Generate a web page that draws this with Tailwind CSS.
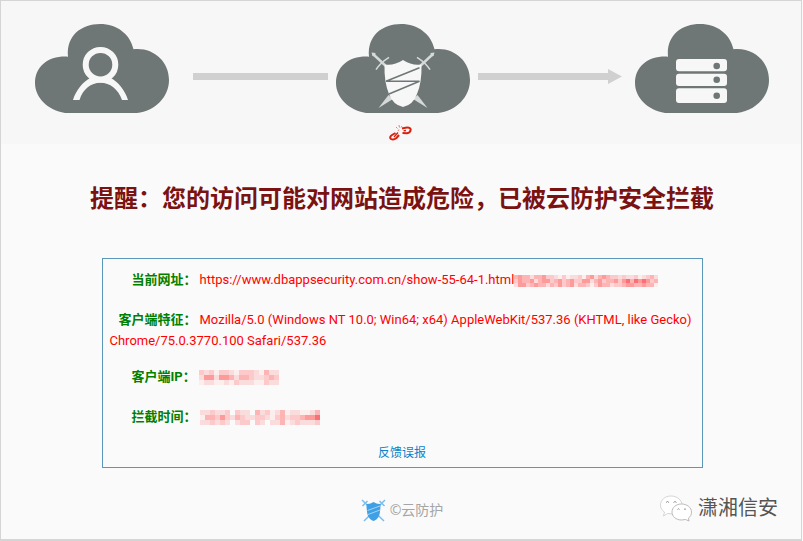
<!DOCTYPE html>
<html lang="zh-CN">
<head>
<meta charset="utf-8">
<title>云防护</title>
<script src="https://cdn.jsdelivr.net/npm/@tailwindcss/browser@4"></script>
</head>
<body class="bg-[#fafafa] font-['Open_Sans','Noto_Sans_CJK_SC',sans-serif]">
<svg class="hidden" aria-hidden="true">
  <symbol id="cloud" viewBox="0 0 134 89">
    <path fill="#6e7776" d="M33 32.700C31 12 46 0 65 0C82 0 95 10 98.500 25.200C118 23 134 37 134 56C134 73 120 87 102 89H30C13 86 0 74 0 59C0 42 14 31.500 33 32.700Z"/>
  </symbol>
</svg>
<div class="mr-px flex min-h-[541px] flex-col border border-b-2 border-[#d5d5d5]">
  <header class="bg-[#f7f7f7] pt-[23px] pr-8 pb-0 pl-[34px]">
    <div class="flex items-start">
      <svg class="h-[89px] w-[134px] shrink-0" viewBox="0 0 134 89" role="img" aria-label="访客">
        <use href="#cloud"/>
        <path fill="#f7f7f7" d="M38 76C41 66 48 58 55 54H76C83 58 90 66 93 76H87C83 65 75 58.800 65.500 58.800C56 58.800 48 65 44.500 76Z"/>
        <circle cx="65.500" cy="40.700" r="14.800" fill="#6e7776" stroke="#f7f7f7" stroke-width="6"/>
      </svg>
      <div class="mt-[49px] mr-2 ml-6 h-[7px] grow-[15] basis-0 bg-[#d0d0d0]"></div>
      <div class="flex shrink-0 flex-col items-center">
        <svg class="h-[89px] w-[134px]" viewBox="0 0 134 89" role="img" aria-label="云防护">
          <use href="#cloud"/>
          <g id="sword" stroke="#d6d9d9" fill="#d6d9d9">
            <path stroke-width="2.400" d="M37 30L52 44"/>
            <path stroke="none" d="M35.500 28.500L39.500 29L39 32.500L36.500 32Z"/>
            <path fill="none" stroke-width="1.500" d="M40 45.700Q44 39 53 33.300"/>
            <path stroke="none" d="M77 75L81.500 71L91.500 84Z"/>
          </g>
          <use href="#sword" transform="matrix(-1 0 0 1 134 0)"/>
          <path fill="#f7f7f7" d="M67 36Q58 42 48.500 40.500Q48 58 53 70Q57 81 67 83Q77 81 81 70Q86 58 85.500 40.500Q76 42 67 36Z"/>
          <path fill="none" stroke="#6e7776" stroke-width="1.500" d="M83.500 43.700L50 57.300H83.500L53 70"/>
        </svg>
        <svg class="mt-3 mb-[3px] ml-[-6px] h-4 w-[23px]" viewBox="0 0 23 16" fill="none" stroke="#d9210f" stroke-width="2">
          <path d="M6.500 8L3 10Q0 12 2 14Q4.500 15.500 7.500 13L10 10"/>
          <path d="M13 3.500L16.500 2.800Q21 2 21.700 4.500Q21.500 8 18 8.200L13.500 8"/>
          <path stroke-width="1.300" d="M5 12L9 7.500M14.500 5.800L17 5.500"/>
          <path stroke-width=".8" stroke="#ec5a4c" d="M10 0L10.500 2.500M7 2L8.500 3.500M13 1L12 2.500M9 6L10 4.500"/>
        </svg>
      </div>
      <div class="mt-[45px] mr-[13px] ml-2 flex grow-[16] basis-0 items-center">
        <div class="h-[7px] grow bg-[#d0d0d0]"></div>
        <svg class="h-[15px] w-[14px]" viewBox="0 0 14 15"><path fill="#d0d0d0" d="M0 0L14 7.500L0 15Z"/></svg>
      </div>
      <svg class="h-[89px] w-[134px] shrink-0" viewBox="0 0 134 89" role="img" aria-label="服务器">
        <use href="#cloud"/>
        <g fill="#f7f7f7">
          <rect x="41" y="35" width="51" height="12.300" rx="3"/>
          <rect x="41" y="49.700" width="51" height="12.300" rx="3"/>
          <rect x="41" y="64.300" width="51" height="14.700" rx="3"/>
        </g>
        <g fill="#6e7776">
          <circle cx="81.700" cy="42" r="3.300"/><circle cx="81.700" cy="55.700" r="3.300"/><circle cx="81.700" cy="71.700" r="3.300"/>
        </g>
      </svg>
    </div>
  </header>
  <main class="pl-[2px]">
    <h1 class="mt-9 text-center text-2xl leading-9 font-bold text-[#7b1212]">提醒：您的访问可能对网站造成危险，已被云防护安全拦截</h1>
    <section class="mx-auto mt-[42px] w-full max-w-[601px] border border-[#5b97b8] px-[7px] pt-[10px] font-['Roboto','Noto_Sans_CJK_SC',sans-serif] text-[13px] leading-[21px] text-[#ff0000]">
      <dl>
        <div class="mb-[19px]">
          <dt class="mr-[3px] inline-block pl-[22px] font-bold text-[#008000]">当前网址：</dt><dd class="inline">https://www.dbappsecurity.com.cn/show-55-64-1.html<span class="inline-block align-middle" data-mosaic="url"></span></dd>
        </div>
        <div class="mb-[15px]">
          <dt class="mr-[3px] inline-block pl-[9px] font-bold text-[#008000]">客户端特征：</dt><dd class="inline">Mozilla/5.0 (Windows NT 10.0; Win64; x64) AppleWebKit/537.36 (KHTML, like Gecko) Chrome/75.0.3770.100 Safari/537.36</dd>
        </div>
        <div class="mb-[19px]">
          <dt class="mr-[3px] inline-block pl-[22px] font-bold text-[#008000]">客户端IP：</dt><dd class="inline"><span class="inline-block align-middle" data-mosaic="ip"></span></dd>
        </div>
        <div class="mb-4">
          <dt class="mr-[3px] inline-block pl-[22px] font-bold text-[#008000]">拦截时间：</dt><dd class="inline"><span class="inline-block align-middle" data-mosaic="time"></span></dd>
        </div>
      </dl>
      <p class="pb-[3px] text-center text-xs leading-[21px]"><a href="#" class="text-[#0c82c8]">反馈误报</a></p>
    </section>
  </main>
  <footer class="relative mt-7 flex items-center justify-center gap-1 pl-[2px] text-sm leading-7 text-[#a5a5a5]">
    <svg class="h-[23px] w-[25px]" viewBox="0 0 25 23">
      <path fill="none" stroke="#7cbdec" stroke-width="1.500" d="M1 1L23 22M24 1L3 22M1.500 7L6.500 2M23.500 7L18.500 2"/>
      <path fill="#3fa0e6" d="M12.500 3Q9 5.500 5.500 5Q5.500 13 7 17Q9 21 12.500 22Q16 21 18 17Q19.500 13 19.500 5Q16 5.500 12.500 3Z"/>
      <path fill="none" stroke="#a5d4f5" d="M19 7L6.500 11.500M19 11L7 15.500"/>
    </svg>
    <span>©云防护</span>
    <div class="absolute right-[23px] bottom-0 flex items-center gap-[6px] text-xl leading-8 text-[#555]">
      <svg class="h-[27px] w-[32px]" viewBox="0 0 32 27" fill="#fff" stroke="#aaa" stroke-width=".8">
        <path stroke="#ccc" d="M11 1C5 1 .5 5 .5 10C.5 13 2 15.500 4.500 17L3.500 21L7.500 18.500L13 19C18 18 22 14.500 22 10C22 5 17 1 11 1Z"/>
        <path d="M21.500 9C16 9 12 12.500 12 17C12 21.500 16 25 21.500 25L25.500 24.500L29 26L28.500 23C30.500 21.500 31.500 19.500 31.500 17C31.500 12.500 27 9 21.500 9Z"/>
        <g fill="none" stroke="#777"><path d="M6 7.500Q7.500 5.500 9 7.500M13.500 7.500Q15 5.500 16.500 7.500"/><path d="M17.500 14.500Q18.500 13 19.500 14.500M24 14.500Q25 13 26 14.500"/></g>
      </svg>
      <span>潇湘信安</span>
    </div>
  </footer>
</div>
<script>
  // Pixelated blocks that hide private values: one letter per cell, light to dark.
  const shades = { '.': 'none', a: '#fdeeee', b: '#fbdcdc', c: '#fccaca', d: '#fcb4b4', e: '#fd9a9a', f: '#fb6f78' };
  const mosaics = {
    url: { cell: 4, rows: ['deddbddeccbacabbcadebdedccbcbbcabcdb', 'ceddebdeecdecdecceebdecddecefdfefecd', 'beecdeddbdcecdebddcaceddbccdeeddedda'] },
    ip: { cell: 5, rows: ['cbcaccbacccbadbb', 'beebeedbddcbbcdc', 'abbaabacbbbaacbb'] },
    time: { cell: 5, rows: ['bbcbbc.cbb.dbcabdabbaabd', 'addcecbdcbbccbacdbccdeef', 'bbcbcb.bcc.cb.bbdabcbbbc'] }
  };
  document.querySelectorAll('[data-mosaic]').forEach(el => {
    const { cell, rows } = mosaics[el.dataset.mosaic];
    const w = rows[0].length * cell, h = rows.length * cell;
    const rects = rows.map((row, y) => [...row].map((s, x) =>
      `<rect x="${x * cell}" y="${y * cell}" width="${cell}" height="${cell}" fill="${shades[s]}"/>`).join('')).join('');
    el.innerHTML = `<svg width="${w}" height="${h}" viewBox="0 0 ${w} ${h}" shape-rendering="crispEdges">${rects}</svg>`;
  });
</script>
</body>
</html>
